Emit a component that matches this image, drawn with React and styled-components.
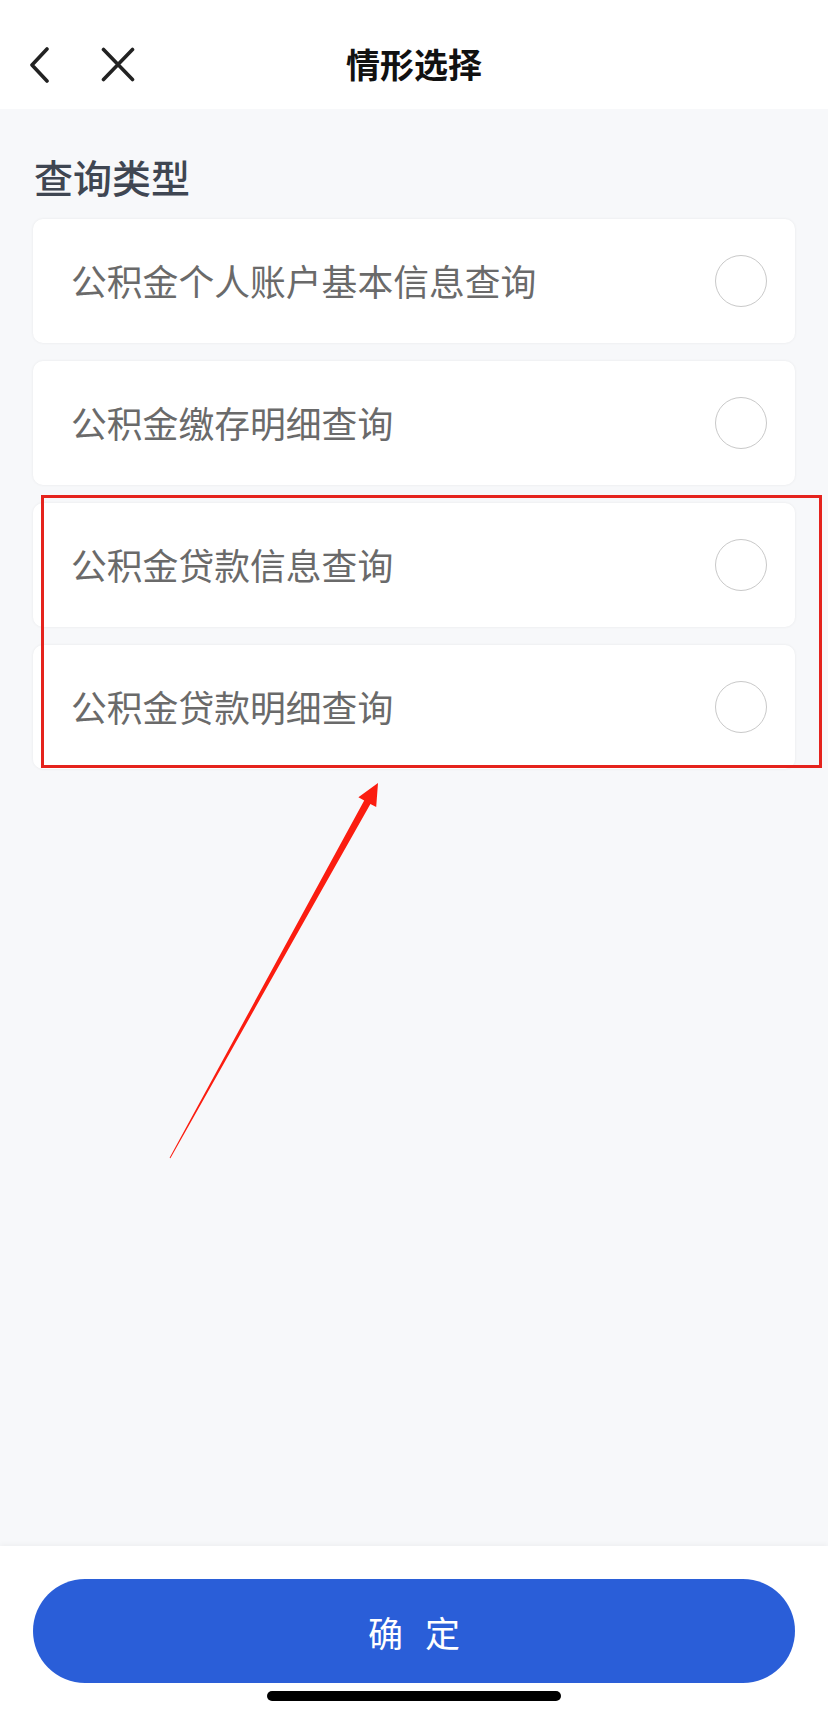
import React from "react";
import styled, { createGlobalStyle } from "styled-components";

const GlobalStyle = createGlobalStyle`
  html, body {
    margin: 0;
    padding: 0;
    background: #f7f8fa;
  }
  body {
    font-family: "Noto Sans CJK SC", "Noto Sans", sans-serif;
  }
  * { box-sizing: border-box; }
`;

const Page = styled.div`
  position: relative;
  width: 828px;
  height: 1716px;
  display: flex;
  flex-direction: column;
  background: #f7f8fa;
  overflow: hidden;
`;

const Header = styled.header`
  position: relative;
  height: 109px;
  flex: none;
  background: #ffffff;
  display: flex;
  align-items: center;
  justify-content: center;
`;

const NavIcons = styled.div`
  position: absolute;
  left: 27px;
  top: 46px;
  display: flex;
  align-items: center;
  gap: 50px;
`;

const IconButton = styled.button`
  border: 0;
  padding: 0;
  background: transparent;
  display: flex;
  width: ${(p) => p.$w}px;
  height: 37px;
  align-items: center;
  justify-content: center;
`;

const Title = styled.h1`
  margin: 0;
  margin-top: 18px;
  font-size: 34px;
  font-weight: 700;
  color: #111111;
  line-height: 1;
`;

const Main = styled.main`
  flex: 1;
  padding: 42px 33px 0;
  display: flex;
  flex-direction: column;
`;

const SectionTitle = styled.h2`
  margin: 0 0 18px;
  padding-left: 1px;
  font-size: 39px;
  line-height: 50px;
  font-weight: 500;
  color: #3f4652;
`;

const List = styled.div`
  display: flex;
  flex-direction: column;
  gap: 18px;
`;

const Card = styled.div`
  height: 124px;
  background: #ffffff;
  border-radius: 10px;
  box-shadow: 0 0 3px rgba(0, 0, 0, 0.07);
  display: flex;
  align-items: center;
  justify-content: space-between;
  padding: 0 28px 0 38px;
`;

const CardText = styled.span`
  font-size: 35.8px;
  color: #6a6a6a;
  line-height: 1;
`;

const Radio = styled.span`
  width: 52px;
  height: 52px;
  border-radius: 50%;
  border: 1px solid #c9c9c9;
  flex: none;
`;

const Footer = styled.footer`
  flex: none;
  height: 170px;
  background: #ffffff;
  box-shadow: 0 -2px 5px rgba(0, 0, 0, 0.035);
  padding: 33px 33px 0;
  display: flex;
  flex-direction: column;
  align-items: center;
`;

const ConfirmButton = styled.button`
  width: 100%;
  height: 104px;
  border: 0;
  border-radius: 52px;
  background: #2a5ed8;
  color: #ffffff;
  font-family: "Noto Sans CJK SC", sans-serif;
  font-size: 35px;
  display: flex;
  align-items: center;
  justify-content: center;
  gap: 22px;
`;

const HomeIndicator = styled.div`
  margin-top: 8px;
  width: 294px;
  height: 10px;
  border-radius: 5px;
  background: #000000;
`;

const HighlightBox = styled.div`
  position: absolute;
  left: 41px;
  top: 495px;
  width: 781px;
  height: 273px;
  border: 3px solid #e5231d;
  pointer-events: none;
`;

const ArrowLayer = styled.svg`
  position: absolute;
  left: 0;
  top: 0;
  pointer-events: none;
`;

const items = [
  "公积金个人账户基本信息查询",
  "公积金缴存明细查询",
  "公积金贷款信息查询",
  "公积金贷款明细查询",
];

export default function App() {
  return (
    <>
      <GlobalStyle />
      <Page>
        <Header>
          <NavIcons>
            <IconButton $w={24} aria-label="back">
              <svg width="22" height="36" viewBox="0 0 22 36">
                <path d="M19 2 L4 18 L19 34" fill="none" stroke="#222" strokeWidth="3.6" strokeLinecap="round" strokeLinejoin="round" />
              </svg>
            </IconButton>
            <IconButton $w={34} aria-label="close">
              <svg width="34" height="35" viewBox="0 0 34 35">
                <path d="M2.5 2.5 L31.5 32.5 M31.5 2.5 L2.5 32.5" fill="none" stroke="#222" strokeWidth="3.6" strokeLinecap="round" />
              </svg>
            </IconButton>
          </NavIcons>
          <Title>情形选择</Title>
        </Header>
        <Main>
          <SectionTitle>查询类型</SectionTitle>
          <List>
            {items.map((t) => (
              <Card key={t}>
                <CardText>{t}</CardText>
                <Radio />
              </Card>
            ))}
          </List>
        </Main>
        <Footer>
          <ConfirmButton>
            <span>确</span>
            <span>定</span>
          </ConfirmButton>
          <HomeIndicator />
        </Footer>
        <HighlightBox />
        <ArrowLayer width="828" height="1716" viewBox="0 0 828 1716">
          <polygon
            points="169.6,1157.8 364.2,800.5 358.4,797.3 378,783 376.2,807.1 370.4,803.9 170.4,1158.2"
            fill="#fb1d10"
          />
        </ArrowLayer>
      </Page>
    </>
  );
}
